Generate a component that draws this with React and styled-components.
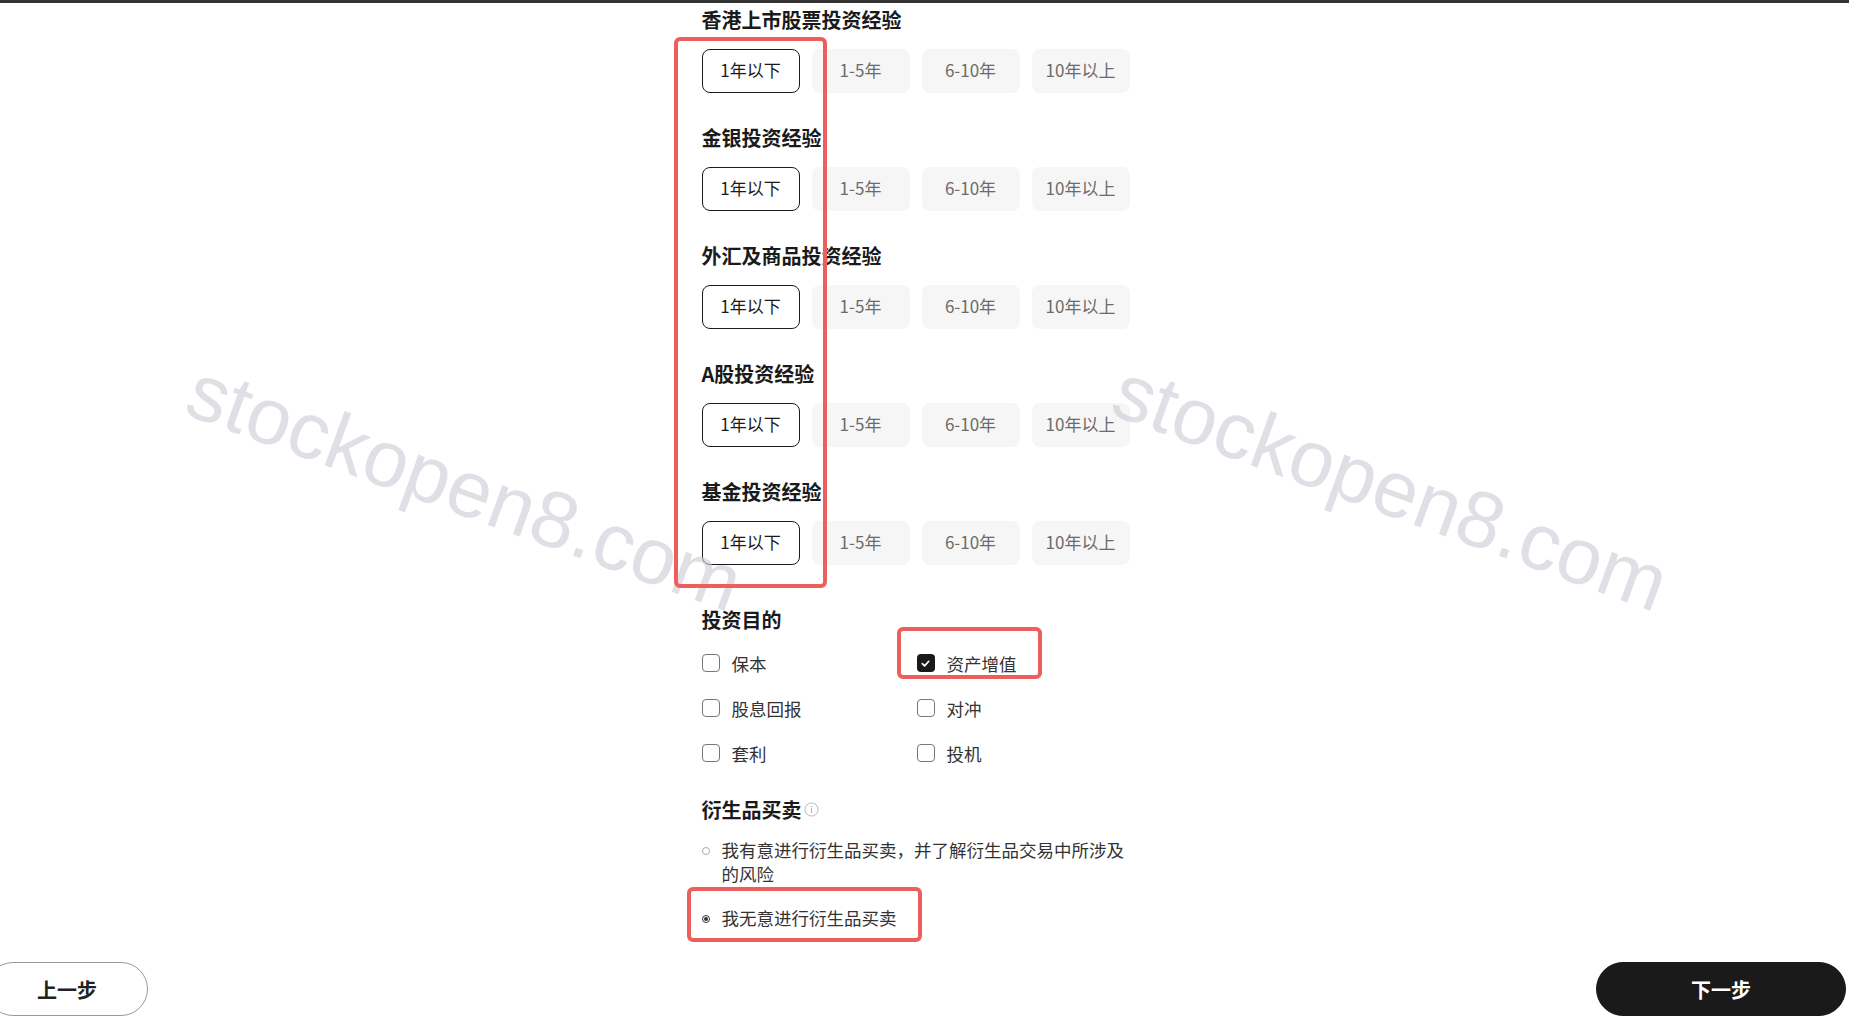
import React from "react";
import styled, { createGlobalStyle } from "styled-components";

const GlobalStyle = createGlobalStyle`
    body {
        margin: 0;
        background: #fff;
        font-family: "Noto Sans CJK SC", "Noto Sans", sans-serif;
        color: #1a1a1a;
    }
`;

const Page = styled.div`
    position: relative;
    min-height: 1029px;
    box-sizing: border-box;
    border-top: 3px solid #333;
    overflow: hidden;
`;

const Form = styled.div`
    width: 446px;
    margin-left: calc(50% - 223px);
    padding-top: 3px;
`;

const Section = styled.section`
    margin-bottom: ${props => props.$space}px;
`;

const Title = styled.h3`
    margin: 0 0 ${props => props.$space}px;
    font-size: 20px;
    line-height: 28px;
    font-weight: 700;
    color: #1a1a1a;
    display: flex;
    align-items: center;
`;

const Options = styled.div`
    display: flex;
    gap: 12px;
`;

const Option = styled.button`
    width: 98px;
    height: 44px;
    box-sizing: border-box;
    border-radius: 8px;
    border: 1px solid ${props => props.$active ? "#1a1a1a" : "transparent"};
    background: ${props => props.$active ? "#fff" : "#f6f6f6"};
    color: ${props => props.$active ? "#1a1a1a" : "#6b6b6b"};
    font-family: inherit;
    font-size: 17px;
    padding: 0 0 3px;
`;

const CheckGrid = styled.div`
    display: grid;
    grid-template-columns: 215px 215px;
    row-gap: 19px;
`;

const CheckItem = styled.label`
    display: flex;
    align-items: center;
    gap: 12px;
    height: 26px;
    font-size: 17.5px;
    color: #333;
`;

const Box = styled.span`
    width: 18px;
    height: 18px;
    box-sizing: border-box;
    border-radius: 4px;
    border: ${props => props.$checked ? "none" : "1.5px solid #777"};
    background: ${props => props.$checked ? "#1a1a1a" : "#fff"};
    display: flex;
    align-items: center;
    justify-content: center;
`;

const RadioList = styled.div`
    display: flex;
    flex-direction: column;
    gap: 20px;
`;

const RadioItem = styled.label`
    display: flex;
    align-items: flex-start;
    gap: 12px;
`;

const Dot = styled.span`
    flex: none;
    width: 8px;
    height: 8px;
    margin-top: 9px;
    box-sizing: border-box;
    border-radius: 50%;
    border: 1px solid ${props => props.$checked ? "#333" : "#aaa"};
    display: flex;
    align-items: center;
    justify-content: center;
    &::after {
        content: "";
        width: 4px;
        height: 4px;
        border-radius: 50%;
        background: ${props => props.$checked ? "#333" : "transparent"};
    }
`;

const RadioText = styled.span`
    max-width: 410px;
    font-size: 17.5px;
    line-height: 24px;
    color: #333;
`;

const Footer = styled.div`
    display: flex;
    justify-content: space-between;
    align-items: center;
    margin: 32.5px 3px 0 -14px;
`;

const NavButton = styled.button`
    width: ${props => props.$primary ? 250 : 162}px;
    height: 54px;
    box-sizing: border-box;
    border-radius: 27px;
    border: 1px solid ${props => props.$primary ? "#1a1a1a" : "#999"};
    background: ${props => props.$primary ? "#1a1a1a" : "#fff"};
    color: ${props => props.$primary ? "#fff" : "#222"};
    font-family: inherit;
    font-size: 20px;
    font-weight: 700;
`;

const Mark = styled.div`
    position: absolute;
    left: ${props => props.$x}px;
    top: ${props => props.$y}px;
    width: ${props => props.$w}px;
    height: ${props => props.$h}px;
    box-sizing: border-box;
    border: 4px solid #ec5f5c;
    border-radius: 6px;
    pointer-events: none;
`;

const Watermark = styled.div`
    position: absolute;
    left: ${props => props.$x}px;
    top: ${props => props.$y}px;
    font-family: "Liberation Sans", Arial, sans-serif;
    font-size: 80px;
    line-height: 80px;
    color: rgba(200, 203, 212, 0.6);
    white-space: nowrap;
    transform: rotate(20deg);
    transform-origin: 0 50%;
    pointer-events: none;
`;

const InfoIcon = () => (
    <svg width="15" height="15" viewBox="0 0 16 16" style={{ marginLeft: 2 }}>
        <circle cx="8" cy="8" r="7" fill="none" stroke="#b5b5b5" strokeWidth="1" />
        <circle cx="8" cy="4.8" r="0.8" fill="#b5b5b5" />
        <rect x="7.4" y="6.6" width="1.2" height="5" fill="#b5b5b5" />
    </svg>
);

const experience = ["香港上市股票投资经验", "金银投资经验", "外汇及商品投资经验", "A股投资经验", "基金投资经验"];
const years = ["1年以下", "1-5年", "6-10年", "10年以上"];
const purposes = [
    ["保本", false], ["资产增值", true],
    ["股息回报", false], ["对冲", false],
    ["套利", false], ["投机", false],
];

export default function App() {
    return (
        <Page>
            <GlobalStyle />
            <Form>
                {experience.map((name, i) => (
                    <Section key={name} $space={i === experience.length - 1 ? 41 : 31}>
                        <Title $space={15}>{name}</Title>
                        <Options>
                            {years.map((y, j) => <Option key={y} $active={j === 0}>{y}</Option>)}
                        </Options>
                    </Section>
                ))}
                <Section $space={29.5}>
                    <Title $space={16}>投资目的</Title>
                    <CheckGrid>
                        {purposes.map(([label, checked]) => (
                            <CheckItem key={label}>
                                <Box $checked={checked}>
                                    {checked && (
                                        <svg width="11" height="11" viewBox="0 0 12 12">
                                            <path d="M2.5 6.2 L5 8.6 L9.6 3.6" fill="none" stroke="#fff" strokeWidth="1.8" strokeLinecap="round" strokeLinejoin="round" />
                                        </svg>
                                    )}
                                </Box>
                                {label}
                            </CheckItem>
                        ))}
                    </CheckGrid>
                </Section>
                <Section $space={0}>
                    <Title $space={14}>衍生品买卖<InfoIcon /></Title>
                    <RadioList>
                        <RadioItem>
                            <Dot />
                            <RadioText>我有意进行衍生品买卖，并了解衍生品交易中所涉及的风险</RadioText>
                        </RadioItem>
                        <RadioItem>
                            <Dot $checked />
                            <RadioText>我无意进行衍生品买卖</RadioText>
                        </RadioItem>
                    </RadioList>
                </Section>
            </Form>
            <Footer>
                <NavButton>上一步</NavButton>
                <NavButton $primary>下一步</NavButton>
            </Footer>
            <Watermark $x={191} $y={345}>stockopen8.com</Watermark>
            <Watermark $x={1117} $y={345}>stockopen8.com</Watermark>
            <Mark $x={674} $y={34} $w={153} $h={551} />
            <Mark $x={897} $y={624} $w={145} $h={52} />
            <Mark $x={687} $y={884} $w={235} $h={55} />
        </Page>
    );
}
